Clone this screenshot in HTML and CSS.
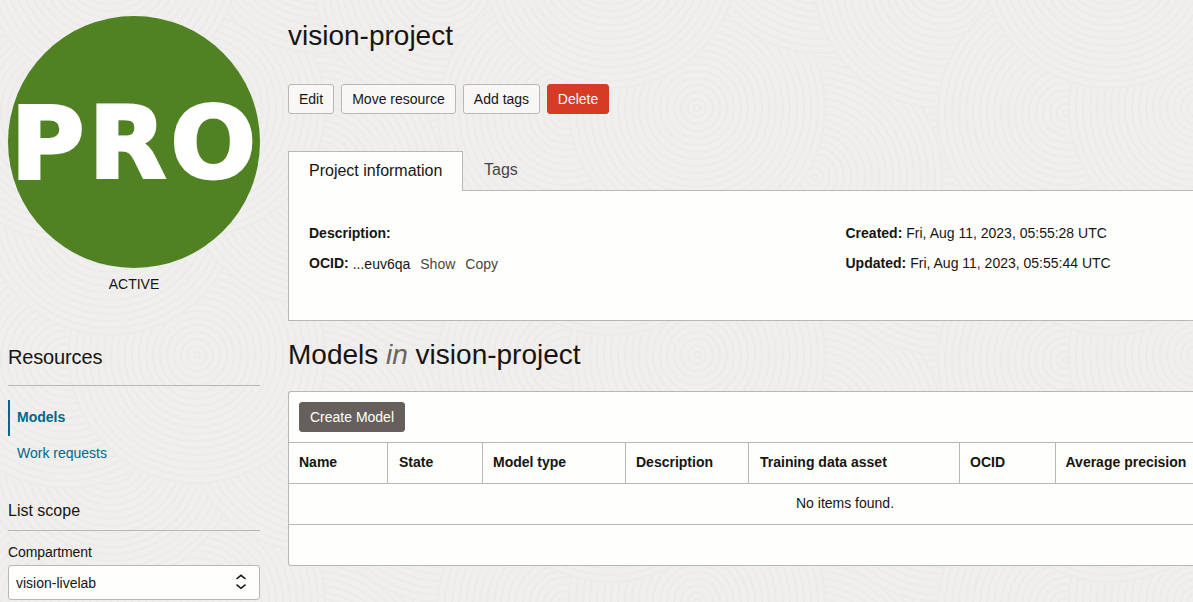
FILE: index.html
```html
<!DOCTYPE html>
<html lang="en">
<head>
<meta charset="utf-8">
<title>vision-project</title>
<link rel="stylesheet" href="styles.css">
</head>
<body>
<svg class="texture" width="1193" height="602" aria-hidden="true">
  <defs>
    <g id="disc">
      <circle r="128"/><circle r="121"/><circle r="114"/><circle r="107"/><circle r="100"/><circle r="93"/><circle r="86"/><circle r="79"/><circle r="72"/><circle r="65"/><circle r="58"/><circle r="51"/><circle r="44"/><circle r="37"/><circle r="30"/><circle r="23"/><circle r="16"/><circle r="9"/><circle r="3"/>
    </g>
    <g id="band">
      <use href="#disc" x="66" y="113"/><use href="#disc" x="314" y="177"/><use href="#disc" x="197" y="108"/><use href="#disc" x="320" y="-75"/><use href="#disc" x="110" y="-40"/><use href="#disc" x="442" y="-20"/>
    </g>
    <g id="row">
      <use href="#band" x="-500"/><use href="#band"/><use href="#band" x="500"/><use href="#band" x="1000"/>
    </g>
  </defs>
  <use href="#row" y="494"/><use href="#row" y="247"/><use href="#row"/>
</svg>
<div class="page">
  <aside class="sidebar">
    <div class="badge"><span class="badge-text">PRO</span></div>
    <div class="status">ACTIVE</div>
    <h2 class="side-title">Resources</h2>
    <nav class="side-nav">
      <a class="side-link side-link-active">Models</a>
      <a class="side-link">Work requests</a>
    </nav>
    <h3 class="scope-title">List scope</h3>
    <label class="field-label">Compartment</label>
    <div class="select">
      <span>vision-livelab</span>
      <svg class="select-icon" width="12" height="16" viewBox="0 0 12 16"><path d="M1.500 5 6 1.300l4.500 3.700M1.500 10.600 6 14.300l4.500-3.700"/></svg>
    </div>
  </aside>
  <main class="main">
    <h1 class="title">vision-project</h1>
    <div class="actions">
      <button class="btn btn-edit">Edit</button>
      <button class="btn btn-move">Move resource</button>
      <button class="btn btn-tags">Add tags</button>
      <button class="btn btn-danger">Delete</button>
    </div>
    <div class="tabs">
      <div class="tab tab-active">Project information</div>
      <div class="tab tab-idle">Tags</div>
    </div>
    <section class="info">
      <div class="info-col">
        <div class="info-row"><b>Description:</b></div>
        <div class="info-row"><b>OCID:</b><span class="ocid">...euv6qa</span><a class="quiet show">Show</a><a class="quiet copy">Copy</a></div>
      </div>
      <div class="info-col">
        <div class="info-row"><b>Created:</b><span class="created">Fri, Aug 11, 2023, 05:55:28 UTC</span></div>
        <div class="info-row"><b>Updated:</b><span class="updated">Fri, Aug 11, 2023, 05:55:44 UTC</span></div>
      </div>
    </section>
    <h1 class="models-title">Models <em>in</em> vision-project</h1>
    <section class="card">
      <div class="toolbar"><button class="btn btn-create">Create Model</button></div>
      <div class="thead">
        <div class="th">Name</div><div class="th">State</div><div class="th">Model type</div><div class="th">Description</div><div class="th">Training data asset</div><div class="th">OCID</div><div class="th">Average precision</div>
      </div>
      <div class="empty">No items found.</div>
      <div class="footer"></div>
    </section>
  </main>
</div>
</body>
</html>
```
FILE: styles.css
```css
* { box-sizing: border-box; }
body {
  margin: 0;
  width: 1193px;
  height: 602px;
  overflow: hidden;
  background: #f0efed;
  color: #161513;
  font: 14px/20px "Liberation Sans", Arial, sans-serif;
}
h1, h2, h3 { margin: 0; font-weight: 400; }
.texture { position: absolute; left: 0; top: 0; z-index: -1; fill: #f0efed; stroke: #ecebe9; stroke-width: 2; }

.page { display: flex; gap: 28px; padding-left: 8px; height: 602px; overflow: hidden; }

.sidebar { width: 252px; flex: none; padding-top: 16px; }
.badge { display: flex; align-items: center; justify-content: center; width: 252px; height: 252px; padding: 3px 0 0 3px; border-radius: 50%; background: #508223; }
.badge-text { color: #fff; font: 700 100.5px/130px "DejaVu Sans", sans-serif; letter-spacing: 4.4px; -webkit-text-stroke: 3px #fff; }
.status { margin-top: 6px; text-align: center; }
.side-title { margin-top: 51px; height: 41px; border-bottom: 1px solid #bcb6b1; font-size: 20px; line-height: 24px; letter-spacing: -0.15px; }
.side-nav { margin-top: 14px; display: flex; flex-direction: column; }
.side-link { height: 36px; line-height: 34px; padding-left: 9px; color: #00688c; }
.side-link-active { border-left: 2px solid #00688c; padding-left: 7px; font-weight: 700; }
.scope-title { margin-top: 28px; height: 31px; border-bottom: 1px solid #bcb6b1; font-size: 16px; line-height: 21px; }
.field-label { display: block; margin-top: 11px; letter-spacing: -0.1px; }
.select { display: flex; align-items: center; justify-content: space-between; margin-top: 3px; height: 35px; padding: 0 12px 0 7px; border: 1px solid #bcb6b1; border-radius: 3px; background: #fefefc; }
.select-icon { margin-bottom: 2px; fill: none; stroke: #161513; stroke-width: 1.5; }

.main { flex: 1; min-width: 0; padding-top: 18px; }
.title { font-size: 28px; line-height: 36px; }
.actions { display: flex; gap: 7px; margin-top: 30px; }
.btn { height: 30px; padding: 0; border: 1px solid #bcb6b1; border-radius: 3px; background: #f8f7f5; color: #161513; font: inherit; white-space: nowrap; }
.btn-edit { width: 46px; }
.btn-move { width: 115px; }
.btn-tags { width: 77px; }
.btn-danger { width: 62px; border-color: #d63b25; background: #d63b25; color: #fff; }
.tabs { display: flex; margin-top: 37px; height: 40px; font-size: 16px; }
.tab-active { width: 175px; padding-left: 20px; border: 1px solid #bcb6b1; border-bottom: 0; background: #fefefc; line-height: 38px; }
.tab-idle { flex: 1; padding-left: 21px; border-bottom: 1px solid #bcb6b1; color: #4a4542; line-height: 37px; }
.info { display: grid; grid-template-columns: 536.5px 1fr; height: 130px; padding: 32px 0 0 20px; border: 1px solid #bcb6b1; border-width: 0 0 1px 1px; background: #fefefc; }
.info-row { display: flex; height: 30px; line-height: 20px; white-space: nowrap; }
.ocid { margin: 1px 0 0 4px; }
.quiet { margin: 1px 0 0 10px; color: #4a4542; }
.created, .updated { margin-left: 4px; }
.models-title { margin-top: 16px; font-size: 28px; line-height: 36px; }
.models-title em { color: #6b6560; }
.card { margin-top: 18px; height: 175px; border: 1px solid #bcb6b1; border-right: 0; border-radius: 3px 0 0 3px; background: #fefefc; }
.toolbar { height: 51px; padding: 10px; border-bottom: 1px solid #bcb6b1; }
.btn-create { width: 106px; border-color: #665f5b; background: #665f5b; color: #fff; }
.thead { display: grid; grid-template-columns: 98px 95px 143px 123px 211px 96px 138px; height: 41px; border-bottom: 1px solid #bcb6b1; }
.th { padding-left: 10px; border-left: 1px solid #bcb6b1; font-weight: 700; line-height: 39px; white-space: nowrap; }
.th:first-child { border-left: 0; }
.th:nth-child(2), .th:nth-child(5) { padding-left: 11px; }
.th:nth-child(7) { padding-left: 9.5px; }
.empty { height: 41px; padding-left: 507px; border-bottom: 1px solid #bcb6b1; line-height: 39px; }
```
